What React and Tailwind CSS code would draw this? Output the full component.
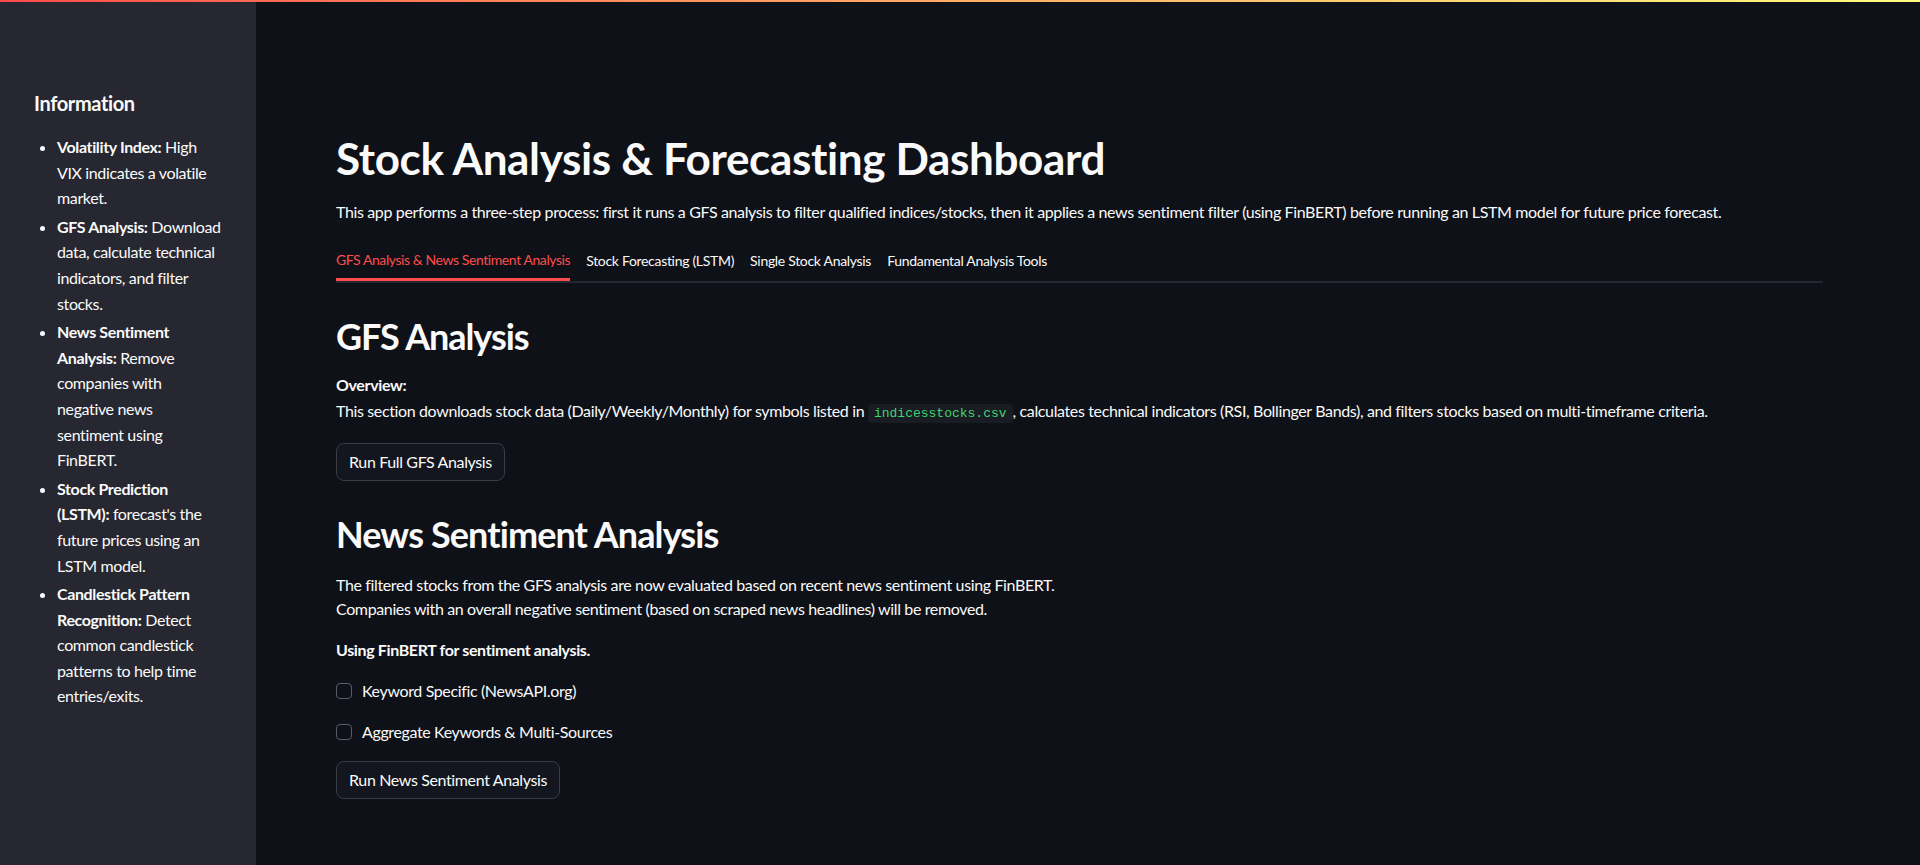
import React from "react";

const font = { fontFamily: 'Lato, Roboto, sans-serif' };

const infoItems = [
  { title: "Volatility Index:", text: "High VIX indicates a volatile market." },
  { title: "GFS Analysis:", text: "Download data, calculate technical indicators, and filter stocks." },
  { title: "News Sentiment Analysis:", text: "Remove companies with negative news sentiment using FinBERT." },
  { title: "Stock Prediction (LSTM):", text: "forecast's the future prices using an LSTM model." },
  { title: "Candlestick Pattern Recognition:", text: "Detect common candlestick patterns to help time entries/exits." },
];

const tabs = [
  "GFS Analysis & News Sentiment Analysis",
  "Stock Forecasting (LSTM)",
  "Single Stock Analysis",
  "Fundamental Analysis Tools",
];

function Sidebar() {
  return (
    <aside className="w-[256px] shrink-0 bg-[#262730] pl-[34px] pr-[35px] pt-[89px] tracking-[-0.023em]">
      <h3 className="text-[20px] font-bold leading-[1.2] text-[#fafafa]">Information</h3>
      <ul className="mt-[19px] list-disc pl-[23px] text-[16px] leading-[25.6px] text-[#fafafa] marker:text-[#fafafa]">
        {infoItems.map((item) => (
          <li key={item.title} className="mb-[3px]">
            <b className="font-bold">{item.title}</b> {item.text}
          </li>
        ))}
      </ul>
    </aside>
  );
}

function Button({ children }) {
  return (
    <button className="h-[38px] self-start rounded-[8px] border border-[#3b3d45] bg-[#13161e] px-[12px] text-[16px] tracking-[-0.023em] text-[#fafafa]">
      {children}
    </button>
  );
}

function Checkbox({ label }) {
  return (
    <label className="flex h-[24px] items-center gap-[10px] text-[16px] text-[#fafafa]">
      <span className="h-[16px] w-[16px] rounded-[4px] border border-[#5a5c66] bg-[#0e1117]" />
      {label}
    </label>
  );
}

export default function App() {
  return (
    <div className="min-h-[865px] bg-[#0e1117] flex flex-col" style={font}>
      <div className="h-[2px] w-full bg-gradient-to-r from-[#ff4b4b] to-[#fffd80]" />
      <div className="flex flex-1">
        <Sidebar />
        <main className="flex-1 pl-[80px] pr-[97px] pt-[130px] text-[#fafafa] tracking-[-0.023em]">
          <h1 className="text-[44px] font-bold leading-[1.2] tracking-[-0.008em]">Stock Analysis &amp; Forecasting Dashboard</h1>
          <p className="mt-[14px] text-[16px] leading-[26px]">
            This app performs a three-step process: first it runs a GFS analysis to filter qualified indices/stocks, then it applies a news sentiment filter (using FinBERT) before running an LSTM model for future price forecast.
          </p>

          <div className="mt-[16px] flex gap-[16px] border-b-2 border-[#262730]">
            {tabs.map((t, i) => (
              <div
                key={t}
                className={
                  i === 0
                    ? "-mb-[2px] flex h-[40px] items-center border-b-[3px] border-[#ff4b4b] text-[14px] tracking-[-0.03em] text-[#ff4b4b]"
                    : "flex h-[40px] items-center text-[14px] tracking-[-0.022em] text-[#fafafa]"
                }
              >
                {t}
              </div>
            ))}
          </div>

          <h2 className="mt-[32px] text-[36px] font-bold leading-[1.2] tracking-[-0.03em]">GFS Analysis</h2>
          <div className="mt-[14px] text-[16px] leading-[26px]">
            <p className="font-bold">Overview:</p>
            <p>
              This section downloads stock data (Daily/Weekly/Monthly) for symbols listed in{" "}
              <code className="rounded-[4px] bg-[#1a1c24] px-[6px] py-[2px] font-['Liberation_Mono',monospace] text-[13px] tracking-normal text-[#3dd56d]">
                indicesstocks.csv
              </code>
              , calculates technical indicators (RSI, Bollinger Bands), and filters stocks based on multi-timeframe criteria.
            </p>
          </div>
          <div className="mt-[16px] flex">
            <Button>Run Full GFS Analysis</Button>
          </div>

          <h2 className="mt-[32px] text-[36px] font-bold leading-[1.2] tracking-[-0.025em]">News Sentiment Analysis</h2>
          <div className="mt-[17px] text-[16px] leading-[24px]">
            <p>The filtered stocks from the GFS analysis are now evaluated based on recent news sentiment using FinBERT.</p>
            <p>Companies with an overall negative sentiment (based on scraped news headlines) will be removed.</p>
          </div>
          <p className="mt-[16px] text-[16px] font-bold leading-[26px]">Using FinBERT for sentiment analysis.</p>
          <div className="mt-[16px] flex flex-col gap-[17px]">
            <Checkbox label="Keyword Specific (NewsAPI.org)" />
            <Checkbox label="Aggregate Keywords & Multi-Sources" />
          </div>
          <div className="mt-[17px] flex">
            <Button>Run News Sentiment Analysis</Button>
          </div>
        </main>
      </div>
    </div>
  );
}
